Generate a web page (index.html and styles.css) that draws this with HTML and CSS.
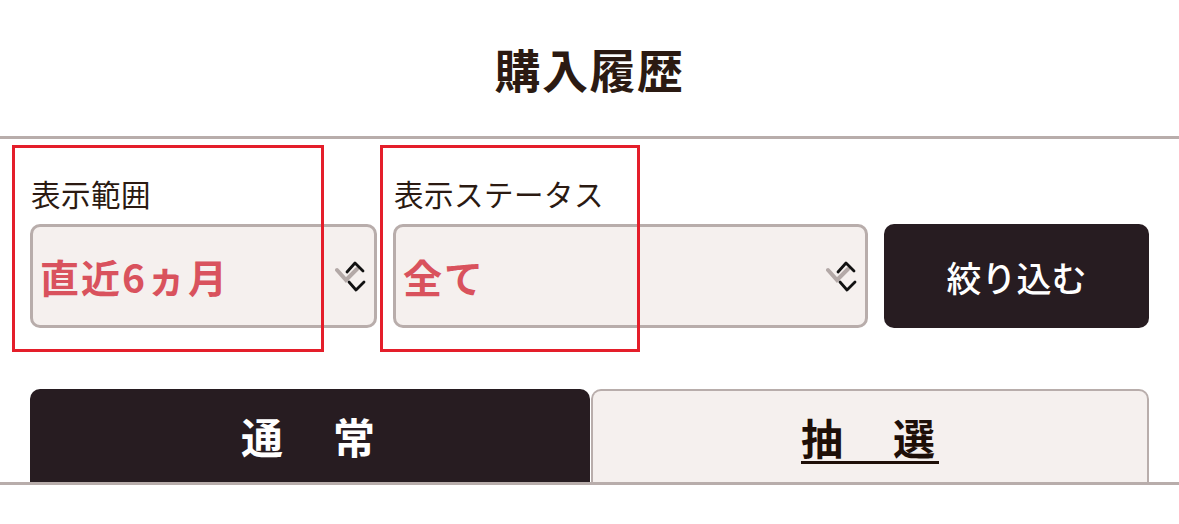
FILE: index.html
```html
<!DOCTYPE html>
<html lang="ja">
<head>
    <meta charset="UTF-8">
    <meta name="viewport" content="width=device-width, initial-scale=1.0">
    <title>購入履歴</title>
    <link rel="stylesheet" href="styles.css">
</head>
<body>
    <header class="page-header">
        <h1>購入履歴</h1>
    </header>

    <section class="filter">
        <div class="field field-range">
            <label class="field-label">表示範囲</label>
            <div class="select">
                <span class="select-value">直近6ヵ月</span>
                <svg class="select-arrow" viewBox="0 0 34 34" width="34" height="34">
                    <polyline points="2,10 11,20 22,9" fill="none" stroke="#b3a9a7" stroke-width="4" stroke-linecap="round"/>
                    <polyline points="12,12 20,3 28,11" fill="none" stroke="#111" stroke-width="2.8" stroke-linecap="round" stroke-linejoin="round"/>
                    <polyline points="14,22 21,30 29,22" fill="none" stroke="#111" stroke-width="2.8" stroke-linecap="round" stroke-linejoin="round"/>
                </svg>
            </div>
            <span class="mark mark-range"></span>
        </div>
        <div class="field field-status">
            <label class="field-label">表示ステータス</label>
            <div class="select">
                <span class="select-value">全て</span>
                <svg class="select-arrow" viewBox="0 0 34 34" width="34" height="34">
                    <polyline points="2,10 11,20 22,9" fill="none" stroke="#b3a9a7" stroke-width="4" stroke-linecap="round"/>
                    <polyline points="12,12 20,3 28,11" fill="none" stroke="#111" stroke-width="2.8" stroke-linecap="round" stroke-linejoin="round"/>
                    <polyline points="14,22 21,30 29,22" fill="none" stroke="#111" stroke-width="2.8" stroke-linecap="round" stroke-linejoin="round"/>
                </svg>
            </div>
            <span class="mark mark-status"></span>
        </div>
        <button class="btn-filter" type="button">絞り込む</button>
    </section>

    <nav class="tabs">
        <a class="tab active" href="#">通　常</a>
        <a class="tab" href="#"><span class="tab-link">抽　選</span></a>
    </nav>
</body>
</html>
```

FILE: styles.css
```css
* {
    margin: 0;
    padding: 0;
    box-sizing: border-box;
    font-family: "Noto Sans CJK JP", "Noto Sans", sans-serif;
}

body {
    background-color: #ffffff;
    color: #2b1a12;
}

.page-header {
    height: 139px;
    display: flex;
    align-items: center;
    justify-content: center;
    border-bottom: 3px solid #b8adab;
}

.page-header h1 {
    font-size: 46px;
    font-weight: 700;
    line-height: 1;
    color: #2b1a12;
    letter-spacing: 1.5px;
}

.filter {
    display: flex;
    align-items: flex-end;
    gap: 16px;
    padding: 34px 30px 0;
}

.field {
    position: relative;
}

.field-range {
    width: 347px;
}

.field-status {
    width: 475px;
}

.field-label {
    display: block;
    font-size: 29.5px;
    line-height: 40px;
    margin-bottom: 11px;
    padding-left: 1px;
    color: #2b1a12;
    letter-spacing: 0.5px;
}

.select {
    display: flex;
    align-items: center;
    height: 104px;
    padding: 0 5px 0 7px;
    background-color: #f5f0ee;
    border: 3px solid #b8adab;
    border-radius: 10px;
}

.select-value {
    font-size: 39px;
    font-weight: 700;
    color: #d9525d;
    letter-spacing: 2px;
}

.select-arrow {
    margin-left: auto;
    margin-top: 2px;
}

.btn-filter {
    flex: 1;
    height: 104px;
    background-color: #271c21;
    color: #ffffff;
    border: none;
    border-radius: 10px;
    font-size: 35px;
    font-weight: 500;
    cursor: pointer;
}

/* red outlines drawn over the two selects */
.mark {
    position: absolute;
    border: 3px solid #e41e2a;
    pointer-events: none;
}

.mark-range {
    left: -18px;
    top: -28px;
    width: 312px;
    height: 207px;
}

.mark-status {
    left: -13px;
    top: -28px;
    width: 260px;
    height: 207px;
}

.tabs {
    display: flex;
    margin-top: 61px;
    padding: 0 30px;
    border-bottom: 3px solid #b8adab;
}

.tab {
    height: 93px;
    display: flex;
    align-items: center;
    justify-content: center;
    text-decoration: none;
    font-size: 42px;
    font-weight: 700;
    letter-spacing: 4px;
    border-radius: 10px 10px 0 0;
}

.tab.active {
    width: 560px;
    background-color: #271c21;
    color: #ffffff;
}

.tab:not(.active) {
    flex: 1;
    margin-left: 1px;
    background-color: #f5f0ee;
    border: 2px solid #b8adab;
    border-bottom: none;
    color: #1e0f08;
}

.tab-link {
    text-decoration: underline;
    text-underline-offset: 6px;
    text-decoration-thickness: 3px;
}
```
